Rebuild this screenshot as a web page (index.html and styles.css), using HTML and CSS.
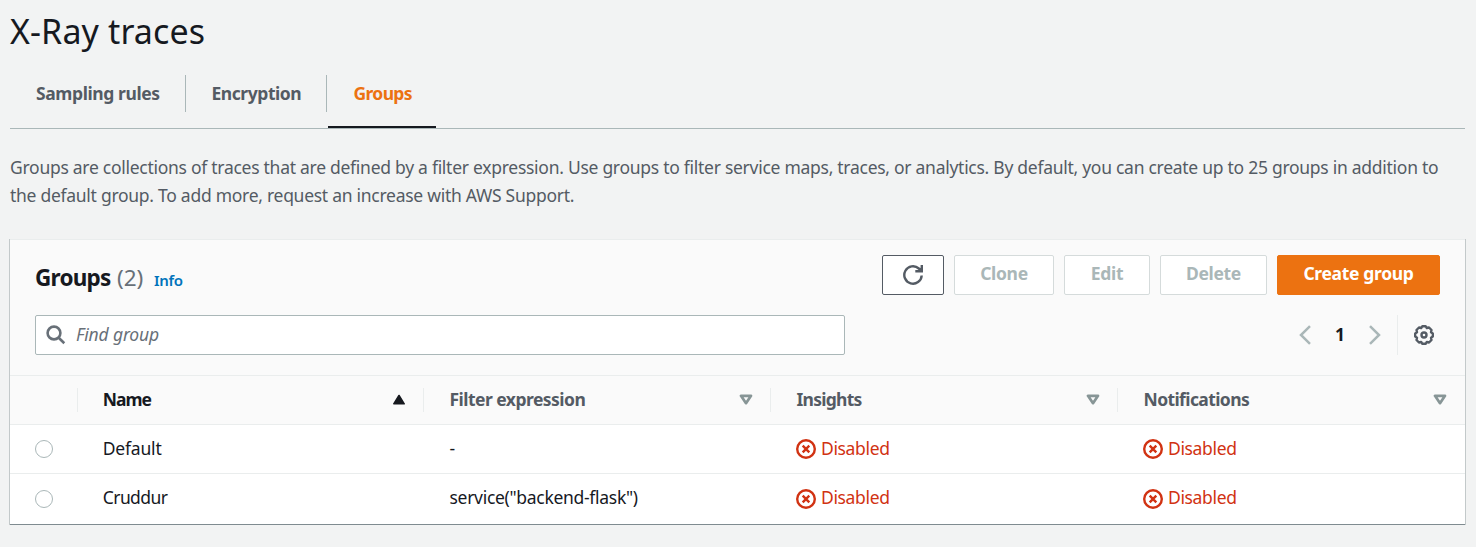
FILE: index.html
```
<!DOCTYPE html>
<html lang="en">
<head>
<meta charset="utf-8">
<title>X-Ray traces</title>
<link rel="stylesheet" href="styles.css">
</head>
<body>
<svg class="sprite" aria-hidden="true">
  <symbol id="status-error" viewBox="0 0 20 20"><circle cx="10" cy="10" r="8.8"/><path d="M6.7 6.7l6.6 6.6M13.3 6.7l-6.6 6.6"/></symbol>
  <symbol id="sort-down" viewBox="0 0 14 11"><path d="M2 1.8h10L7 9.2z"/></symbol>
</svg>
<main class="page">
  <h1 class="page-title">X-Ray traces</h1>
  <nav class="tabs">
    <a class="tab">Sampling rules</a>
    <a class="tab tab-encryption">Encryption</a>
    <a class="tab tab-active">Groups</a>
  </nav>
  <p class="description">Groups are collections of traces that are defined by a filter expression. Use groups to filter service maps, traces, or analytics. By default, you can create up to 25 groups in addition to<br>the default group. To add more, request an increase with AWS Support.</p>
  <section class="panel">
    <header class="panel-header">
      <div class="heading-row">
        <h2 class="heading"><span class="t-heading">Groups</span><span class="count">(2)</span></h2>
        <a class="info">Info</a>
        <div class="actions">
          <button class="button refresh" aria-label="Refresh"><svg class="icon" viewBox="0 0 20 20"><path d="M18.7 10.5A8.7 8.7 0 1 1 15.8 3.5L18.5 6M18.8 0v6.2h-6.5"/><path class="solid" d="M19.5 1v6h-6z"/></svg></button>
          <button class="button clone disabled">Clone</button>
          <button class="button edit disabled">Edit</button>
          <button class="button delete disabled">Delete</button>
          <button class="button primary">Create group</button>
        </div>
      </div>
      <div class="tools">
        <div class="search">
          <svg class="search-icon" viewBox="0 0 20 20"><circle cx="8" cy="8" r="6.4"/><path d="M12.7 12.7l5.6 5.5"/></svg>
          <span class="t-find">Find group</span>
        </div>
        <div class="pager">
          <svg class="chevron" viewBox="0 0 12 20"><path d="M11 1.2L2 10l9 8.8"/></svg>
          <span class="page-number">1</span>
          <svg class="chevron" viewBox="0 0 12 20"><path d="M1 1.2L10 10l-9 8.8"/></svg>
          <span class="divider"></span>
          <svg class="gear" viewBox="0 0 20 20"><path d="M7.2 3L8.4 1.2H11.6L12.8 3L15 2.5L17.5 5L17 7.2L18.8 8.4V11.6L17 12.8L17.5 15L15 17.5L12.8 17L11.6 18.8H8.4L7.2 17L5 17.5L2.5 15L3 12.8L1.2 11.6V8.4L3 7.2L2.5 5L5 2.5Z"/><circle cx="10" cy="10" r="2.5"/></svg>
        </div>
      </div>
    </header>
    <div class="table">
      <div class="row head">
        <div class="select"></div>
        <div class="cell name sorted"><span class="t-name">Name</span><svg class="sort" viewBox="0 0 14 11"><path d="M7 1.5L12.2 9.8H1.8z"/></svg></div>
        <div class="cell"><span class="t-filter">Filter expression</span><svg class="sort"><use href="#sort-down"/></svg></div>
        <div class="cell"><span class="t-insights">Insights</span><svg class="sort"><use href="#sort-down"/></svg></div>
        <div class="cell"><span class="t-notif">Notifications</span><svg class="sort"><use href="#sort-down"/></svg></div>
      </div>
      <div class="row">
        <div class="select"><span class="radio"></span></div>
        <div class="cell name"><span class="t-default">Default</span></div>
        <div class="cell"><span class="dash">-</span></div>
        <div class="cell status"><svg class="error"><use href="#status-error"/></svg><span class="t-disabled">Disabled</span></div>
        <div class="cell status"><svg class="error"><use href="#status-error"/></svg><span class="t-disabled">Disabled</span></div>
      </div>
      <div class="row last">
        <div class="select"><span class="radio"></span></div>
        <div class="cell name"><span class="t-cruddur">Cruddur</span></div>
        <div class="cell"><span class="t-service">service("backend-flask")</span></div>
        <div class="cell status"><svg class="error"><use href="#status-error"/></svg><span class="t-disabled">Disabled</span></div>
        <div class="cell status"><svg class="error"><use href="#status-error"/></svg><span class="t-disabled">Disabled</span></div>
      </div>
    </div>
  </section>
</main>
</body>
</html>
```
FILE: styles.css
```
* { box-sizing: border-box; }
body { margin: 0; background: #f2f3f3; color: #16191f; font: 17.5px/28px "Noto Sans", "Open Sans", sans-serif; }
h1, h2, p { margin: 0; }
svg { fill: none; stroke: currentColor; flex: none; }
.sprite { display: none; }
.page { padding: 8px 11px 0 10px; }
.page-title { font-size: 34px; line-height: 46px; font-weight: 400; white-space: nowrap; letter-spacing: .12px; }

.tabs { display: flex; height: 75px; border-bottom: 1px solid #aab7b8; padding-top: 21px; }
.tab { height: 37px; padding: 0 25px 0 26px; line-height: 36px; font-weight: 700; color: #545b64; border-right: 1px solid #aab7b8; width: 176px; white-space: nowrap; letter-spacing: -.4px; }
.tab-encryption { width: 141px; padding-left: 25.5px; letter-spacing: -.45px; }
.tab-active { width: 108px; height: 53px; margin-left: 1px; color: #ec7211; border-right: 0; border-bottom: 2px solid #16191f; padding-left: 25.5px; letter-spacing: -.65px; }

.description { padding-top: 24px; color: #545b64; white-space: nowrap; height: 110px; letter-spacing: -.275px; }

.panel { background: #fff; height: 286px; box-shadow: 0 1px 0 #ccd1d2, -1px 0 0 #c3c9ca, 1px 0 0 #c3c9ca; border-top: 1px solid #eaeded; border-bottom: 1px solid #7f8b90; }
.panel-header { background: #fafafa; height: 135px; padding: 15px 25px 0; }
.heading-row, .actions, .tools, .pager { display: flex; }
.heading-row { height: 40px; align-items: center; }
.heading { display: flex; font-size: 22.5px; line-height: 30px; font-weight: 700; padding-top: 6px; width: 119px; white-space: nowrap; }
.t-heading { width: 76px; letter-spacing: -.75px; }
.count { color: #687078; font-weight: 400; margin-left: 6px; }
.info { color: #0073bb; font-size: 15px; font-weight: 600; padding-top: 9px; letter-spacing: -.3px; }
.actions { margin-left: auto; gap: 10px; }
.button { height: 40px; padding: 0 0 4px; border: 1px solid #d5dbdb; border-radius: 2px; background: #fff; font: 700 17.5px/34px "Noto Sans", "Open Sans", sans-serif; white-space: nowrap; letter-spacing: -.33px; }
.refresh { width: 62px; border-color: #545b64; color: #545b64; display: grid; place-items: center; padding: 0; }
.icon { width: 20px; height: 20px; stroke-width: 2.4; }
.solid { fill: currentColor; stroke: none; }
.disabled { color: #aab7b8; }
.clone { width: 100px; }
.edit { width: 86px; }
.delete { width: 107px; }
.primary { width: 163px; color: #fff; background: #ec7211; border-color: #ec7211; }

.tools { margin-top: 20px; justify-content: space-between; }
.search { width: 810px; height: 40px; display: flex; align-items: center; border: 1px solid #aab7b8; border-radius: 2px; background: #fff; padding-left: 10px; color: #687078; font-style: italic; letter-spacing: -.15px; }
.search-icon { width: 20px; height: 20px; stroke-width: 2.6; margin-right: 10px; }
.t-find { padding-bottom: 2px; }
.pager { align-items: center; height: 40px; padding-right: 6px; }
.chevron { width: 12px; height: 20px; color: #aab7b8; stroke-width: 2.5; }
.page-number { width: 58px; text-align: center; font-weight: 700; padding-bottom: 2px; }
.divider { width: 1px; height: 40px; background: #eaeded; margin: 0 16px; }
.gear { width: 20px; height: 20px; color: #545b64; stroke-width: 2.4; stroke-linejoin: round; }

.row { display: grid; grid-template-columns: 68px 346px 347px 347px 347px; height: 49px; border-bottom: 1px solid #eaeded; line-height: 46px; }
.row .cell > span { padding-bottom: 2px; }
.head { height: 50px; background: #fafafa; border-top: 1px solid #eaeded; font-weight: 700; color: #545b64; }
.last { border-bottom: 0; }
.last .cell > span { padding-bottom: 3px; }
.cell { display: flex; align-items: center; padding: 0 17px 0 25.5px; white-space: nowrap; }
.name { padding-left: 24.8px; }
.head .select, .head .cell { border-right: 1px solid #eaeded; height: 24px; margin-top: 12px; }
.head .cell:last-child { border-right: 0; padding-right: 18px; }
.sorted { color: #16191f; }
.sort { width: 14px; height: 11px; margin-left: auto; margin-bottom: 1px; color: #879596; stroke-width: 2.7; stroke-linejoin: round; }
.sorted .sort { color: #16191f; fill: currentColor; stroke-width: 1.6; }
.select { display: flex; align-items: center; padding-left: 25px; }
.radio { width: 18px; height: 18px; border: 1px solid #aab7b8; border-radius: 50%; background: #fff; }
.status { color: #d13212; padding-left: 25px; }
.error { width: 20px; height: 20px; margin-right: 5px; stroke-width: 2.4; }
.t-name { letter-spacing: -1px; }
.t-filter { letter-spacing: -.53px; }
.t-insights { letter-spacing: -.75px; }
.t-notif { letter-spacing: -.6px; }
.t-default { letter-spacing: -.2px; }
.t-disabled { letter-spacing: -.35px; }
.t-cruddur { letter-spacing: -.6px; }
.t-service { letter-spacing: -.3px; }
```
